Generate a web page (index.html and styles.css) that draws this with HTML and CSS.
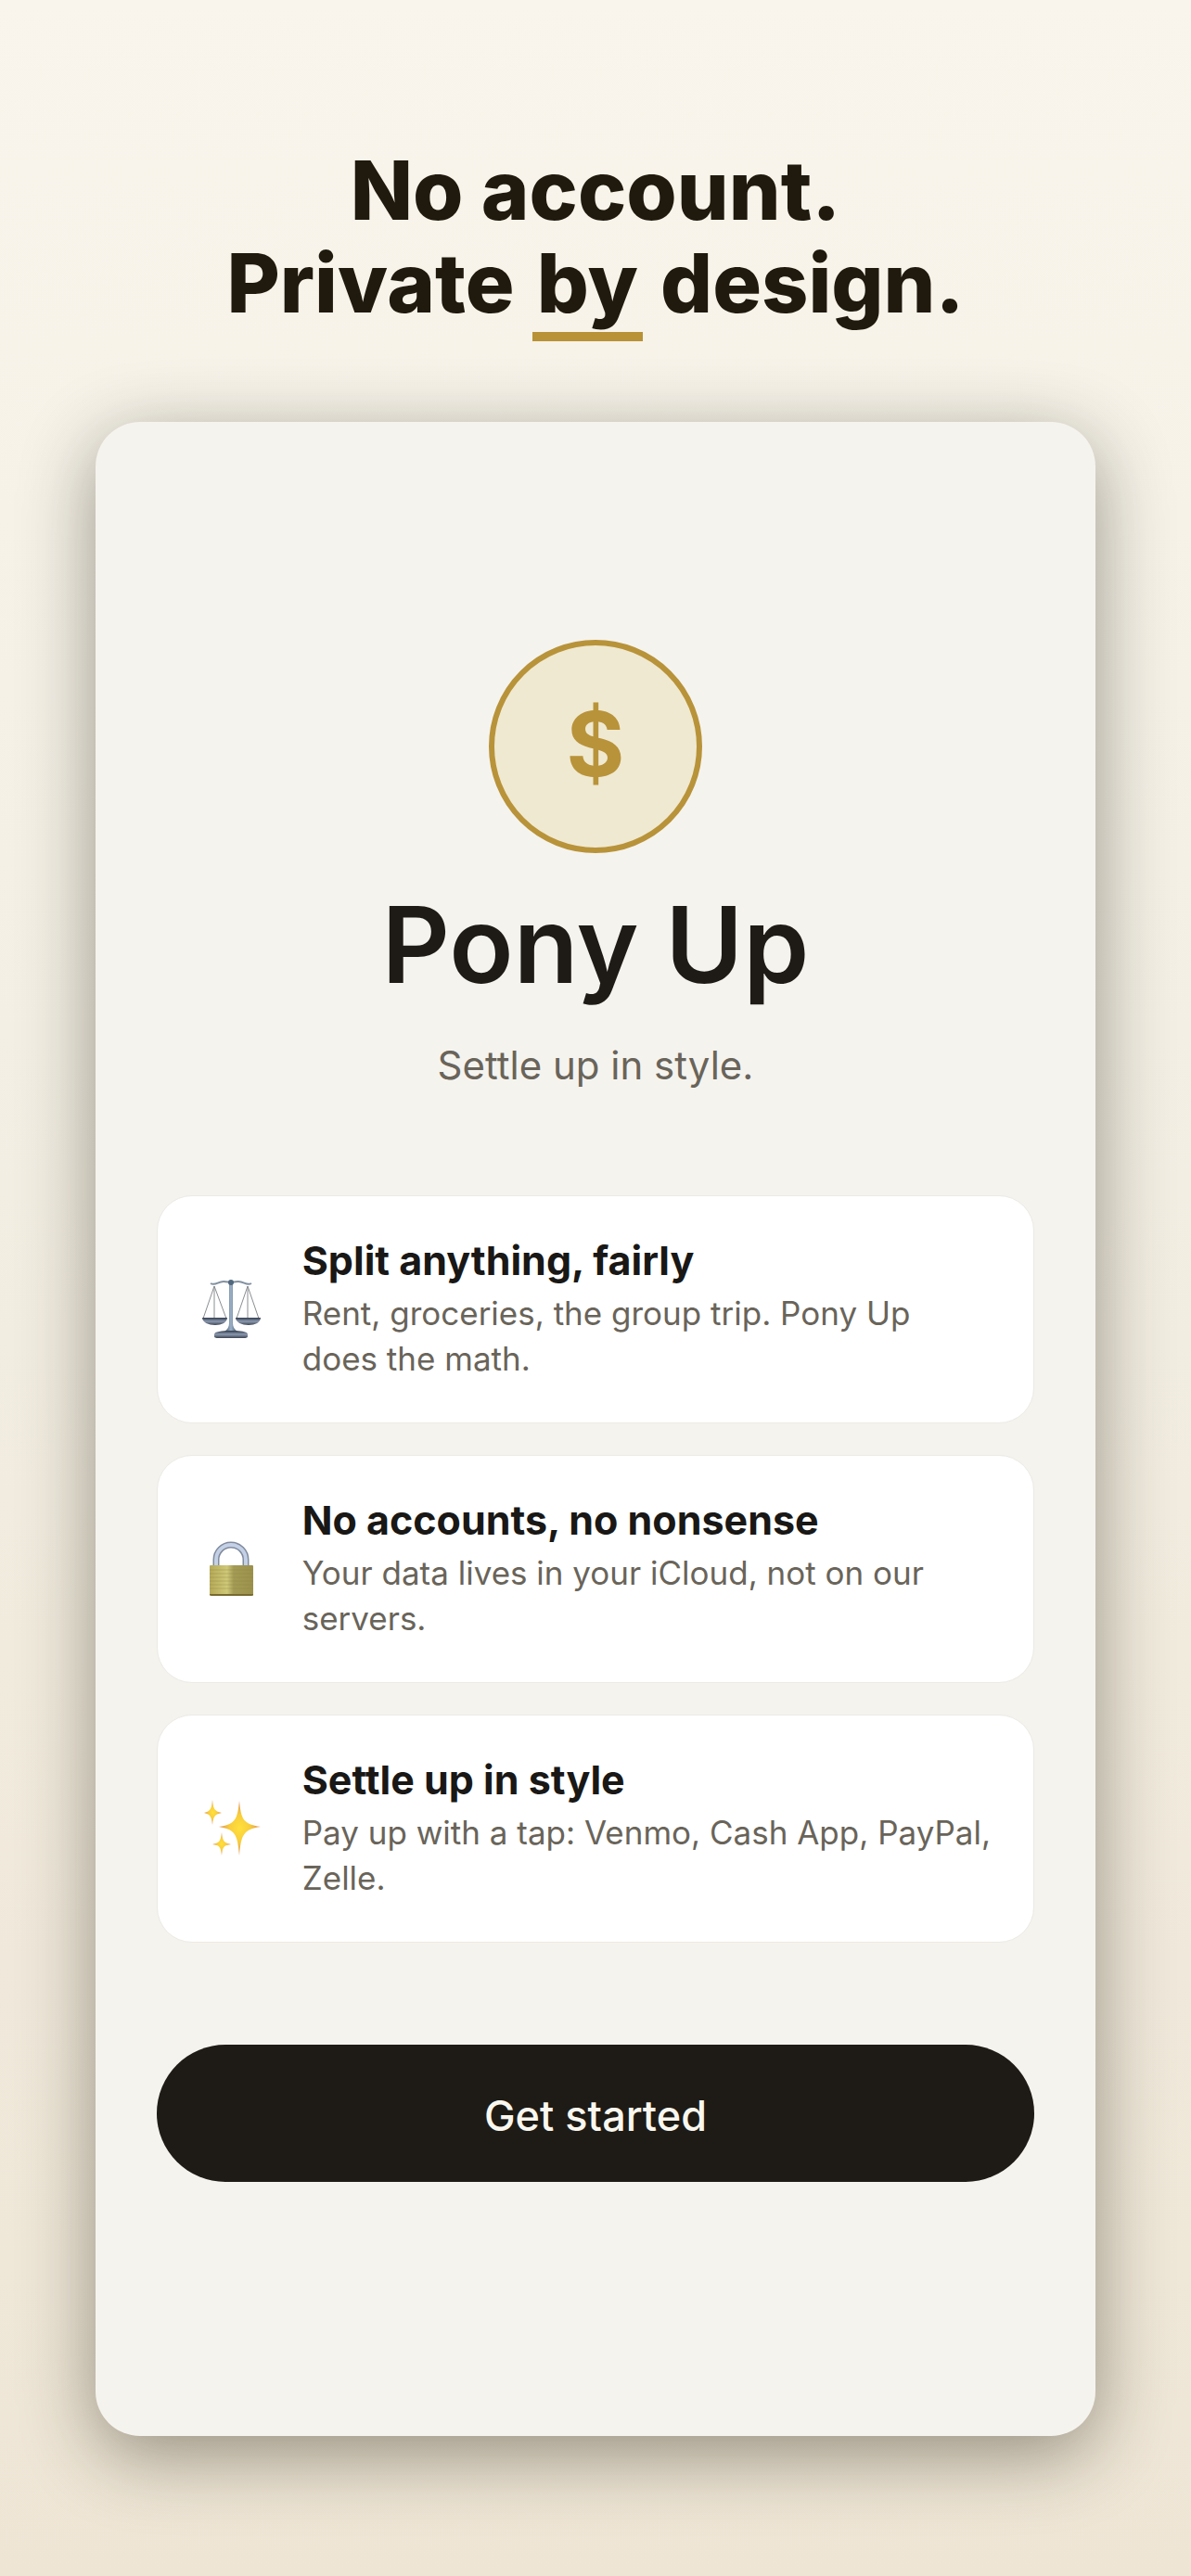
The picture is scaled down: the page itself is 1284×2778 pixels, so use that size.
FILE: index.html
```html
<!DOCTYPE html>
<html lang="en">
<head>
    <meta charset="UTF-8">
    <meta name="viewport" content="width=device-width, initial-scale=1.0">
    <title>Pony Up</title>
    <link rel="stylesheet" href="styles.css">
</head>
<body>
    <h1 class="headline">No account.<br>Private <span class="underlined">by</span> design.</h1>

    <main class="screen">
        <div class="coin">$</div>
        <h2 class="app-name">Pony Up</h2>
        <p class="tagline">Settle up in style.</p>

        <ul class="features">
            <li class="feature">
                <svg class="feature-icon" viewBox="-1 -2 66 66" aria-hidden="true">
                    <defs>
                        <linearGradient id="steel" x1="0" y1="0" x2="0" y2="1">
                            <stop offset="0" stop-color="#2f3a4a"/>
                            <stop offset="0.5" stop-color="#8d9ab0"/>
                            <stop offset="1" stop-color="#3a4350"/>
                        </linearGradient>
                        <linearGradient id="post" x1="0" y1="0" x2="1" y2="0">
                            <stop offset="0" stop-color="#3f5368"/>
                            <stop offset="0.5" stop-color="#9db2c8"/>
                            <stop offset="1" stop-color="#3f5368"/>
                        </linearGradient>
                    </defs>
                    <path d="M10 3c5 3 8-2 14-2 4 0 5 1 8 1s4-1 8-1c6 0 9 5 14 2" fill="none" stroke="#8290a0" stroke-width="2"/>
                    <path d="M14 6L2 41M14 6v35M14 6l13 35M50 6L38 41M50 6v35M50 6l12 35" fill="none" stroke="#8a8d90" stroke-width="1"/>
                    <path d="M30 3h4v43c0 4 2 7 5 9H25c3-2 5-5 5-9z" fill="url(#post)"/>
                    <circle cx="32" cy="2" r="3" fill="#50677e"/>
                    <path d="M1 40h27c0 5-6 8-13 8S1 45 1 40zM37 40h27c0 5-6 8-13 8s-14-3-14-8z" fill="url(#steel)"/>
                    <path d="M14 58c0-3 8-4 18-4s18 1 18 4v2c0 2-3 2-5 2H19c-2 0-5 0-5-2z" fill="url(#steel)"/>
                </svg>
                <div class="feature-text">
                    <h3>Split anything, fairly</h3>
                    <p>Rent, groceries, the group trip. Pony Up does the math.</p>
                </div>
            </li>
            <li class="feature">
                <svg class="feature-icon" viewBox="-1 -2 66 66" aria-hidden="true">
                    <defs>
                        <linearGradient id="brass" x1="0" y1="0" x2="1" y2="0">
                            <stop offset="0" stop-color="#b5a957"/>
                            <stop offset="0.4" stop-color="#cfc878"/>
                            <stop offset="0.55" stop-color="#a39b55"/>
                            <stop offset="1" stop-color="#9c914c"/>
                        </linearGradient>
                    </defs>
                    <path d="M16 30V21a16 16 0 0 1 32 0v9" fill="none" stroke="#808b9d" stroke-width="7"/>
                    <path d="M16 30V21a16 16 0 0 1 32 0v9" fill="none" stroke="#c3d0e6" stroke-width="4"/>
                    <rect x="9" y="27" width="47" height="33" rx="1" fill="url(#brass)"/>
                    <path d="M9 32h47M9 36h47M9 40h47M9 44h47M9 48h47M9 52h47" stroke="#8b8245" stroke-width="1" opacity="0.35"/>
                    <path d="M9 58h47v1l-2 1H11l-2-1z" fill="#776a30"/>
                </svg>
                <div class="feature-text">
                    <h3>No accounts, no nonsense</h3>
                    <p>Your data lives in your iCloud, not on our servers.</p>
                </div>
            </li>
            <li class="feature">
                <svg class="feature-icon" viewBox="-1 -2 66 66" aria-hidden="true">
                    <defs>
                        <radialGradient id="glow">
                            <stop offset="0" stop-color="#ffe03c"/>
                            <stop offset="0.5" stop-color="#f8cd3c"/>
                            <stop offset="1" stop-color="#dc9058"/>
                        </radialGradient>
                    </defs>
                    <g fill="url(#glow)">
                        <path d="M41 1c2 20 4 25 23 28-19 3-21 9-23 31-2-22-4-28-22-31 18-3 20-8 22-28z"/>
                        <path d="M12 0c1 10 2 12 10 14-8 2-9 4-10 13-1-9-2-11-9-13 7-2 8-4 9-14z"/>
                        <path d="M22 35c1 9 2 11 10 13-8 1-9 3-10 12-1-9-2-11-10-12 8-2 9-4 10-13z"/>
                    </g>
                </svg>
                <div class="feature-text">
                    <h3>Settle up in style</h3>
                    <p>Pay up with a tap: Venmo, Cash App, PayPal, Zelle.</p>
                </div>
            </li>
        </ul>

        <button class="start-button" type="button">Get started</button>
    </main>
</body>
</html>
```
FILE: styles.css
```css
* {
    box-sizing: border-box;
}

body {
    margin: 0;
    min-height: 100vh;
    padding: 155px 8% 151px;
    display: flex;
    flex-direction: column;
    font-family: Inter, sans-serif;
    color: #1e1b16;
    background: linear-gradient(#f9f5ec, #f3efe4 40%, #eee5d5);
}

h1, h2, h3, p, ul {
    margin: 0;
    padding: 0;
}

.headline {
    margin-bottom: 100px;
    font-size: 88px;
    line-height: 100px;
    font-weight: 800;
    text-align: center;
    color: #20190d;
}

.underlined {
    position: relative;
    padding: 0 5px;
}

/* gold bar crosses the tail of the "y" */
.underlined::after {
    content: "";
    position: absolute;
    left: 0;
    right: 0;
    bottom: -10px;
    height: 10px;
    background-color: #b99237;
}

.screen {
    flex-grow: 1;
    display: flex;
    flex-direction: column;
    align-items: center;
    padding: 235px 66px 100px;
    border-radius: 48px;
    background-color: #f5f3ee;
    box-shadow: 0 20px 80px rgba(40, 35, 20, 0.45);
}

.coin {
    width: 230px;
    height: 230px;
    padding-bottom: 6px;
    display: flex;
    align-items: center;
    justify-content: center;
    border: 6px solid #b8933a;
    border-radius: 50%;
    background-color: #f0e9d1;
    color: #b8933a;
    font-size: 96px;
    font-weight: 700;
}

.app-name {
    margin-top: 29px;
    font-size: 114px;
    line-height: 140px;
    font-weight: 600;
}

.tagline {
    margin-top: 32px;
    font-size: 42px;
    line-height: 56px;
    color: #69645a;
}

.features {
    width: 100%;
    margin-top: 112px;
    display: flex;
    flex-direction: column;
    gap: 34px;
    list-style: none;
}

.feature {
    display: flex;
    align-items: center;
    gap: 44px;
    padding: 44px 46px;
    border: 1px solid #eceae4;
    border-radius: 38px;
    background-color: #fff;
}

.feature-icon {
    flex-shrink: 0;
    width: 66px;
    height: 66px;
}

.feature-text h3 {
    margin-bottom: 8px;
    font-size: 43px;
    line-height: 50px;
    font-weight: 700;
    color: #191816;
}

.feature-text p {
    font-size: 35px;
    line-height: 49px;
    color: #69645a;
}

.start-button {
    width: 100%;
    height: 148px;
    margin-top: 110px;
    padding: 4px 0 0;
    border: none;
    border-radius: 74px;
    background-color: #1e1b16;
    color: #faf7ef;
    font-family: Inter, sans-serif;
    font-size: 45px;
    font-weight: 500;
    cursor: pointer;
}
```
